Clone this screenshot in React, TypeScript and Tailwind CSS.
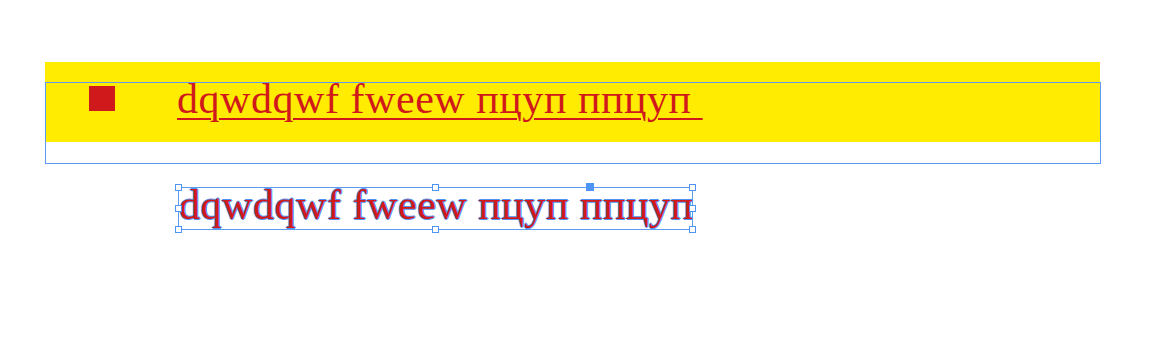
import React from "react";

const TEXT = "dqwdqwf fweew пцуп ппцуп";

function Handle({ className }: { className: string }) {
  return (
    <span
      className={
        "absolute w-[7px] h-[7px] bg-white border border-[#4d94f5] " + className
      }
    />
  );
}

export default function App() {
  return (
    <div
      className="w-[1170px] h-[360px] bg-white pt-[62px] pl-[45px]"
      style={{ fontFamily: '"Liberation Serif", "DejaVu Serif", serif' }}
    >
      {/* paragraph frame */}
      <div className="relative w-[1055px] h-[101px]">
        <div className="h-[80px] bg-[#ffec00] flex items-start gap-[62px] pt-[13px] pl-[44px]">
          <div className="w-[26px] h-[25px] bg-[#d0191b] mt-[11px]" />
          <div className="text-[42px] leading-[48px] tracking-[0.55px] text-[#d0191b] underline decoration-[2px] underline-offset-[5px] whitespace-pre">
            {TEXT + " "}
          </div>
        </div>
        <div className="absolute left-0 top-[20px] w-[1056px] h-[82px] border border-[#5b9bf0]" />
      </div>

      {/* selected text object */}
      <div className="ml-[133px] mt-[24px] relative w-[515px] h-[43px] border border-[#5b9bf0]">
        <div
          className="-mt-[7px] text-[42px] leading-[48px] tracking-[0.55px] text-[#d0191b] whitespace-pre"
          style={{
            textShadow:
              "1px 0 0 #4d94f5, -1px 0 0 #4d94f5, 0 1px 0 #4d94f5, 0 -1px 0 #4d94f5",
          }}
        >
          {TEXT}
        </div>
        <Handle className="-left-[4px] -top-[4px]" />
        <Handle className="left-[253px] -top-[4px]" />
        <Handle className="-right-[4px] -top-[4px]" />
        <Handle className="-left-[4px] top-[17px]" />
        <Handle className="-right-[4px] top-[17px]" />
        <Handle className="-left-[4px] -bottom-[4px]" />
        <Handle className="left-[253px] -bottom-[4px]" />
        <Handle className="-right-[4px] -bottom-[4px]" />
        <span className="absolute left-[407px] -top-[5px] w-[8px] h-[8px] bg-[#4d94f5]" />
      </div>
    </div>
  );
}
